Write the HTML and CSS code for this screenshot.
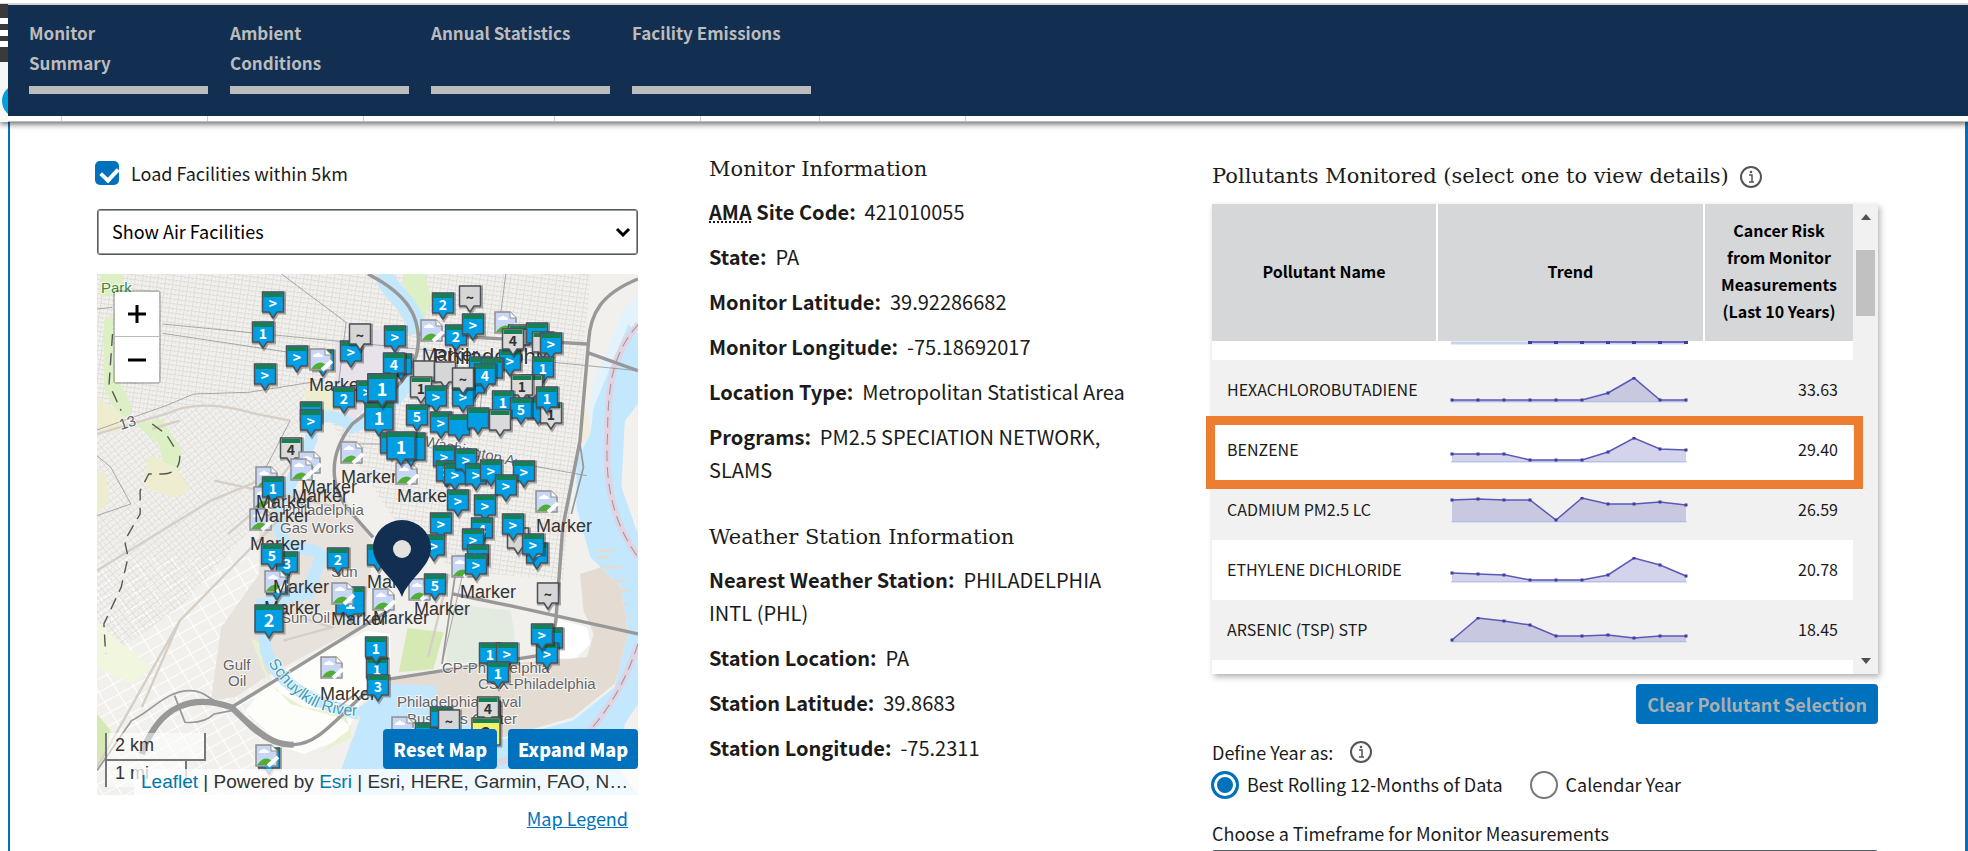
FILE: index.html
```html
<!DOCTYPE html>
<html lang="en">
<head>
<meta charset="utf-8">
<title>Monitor Summary</title>
<link rel="stylesheet" href="styles.css">
</head>
<body>
<header class="topbar">
  <svg class="edge" width="32" height="122" viewBox="0 0 32 122" aria-hidden="true">
    <path fill="#3a3a3a" d="M0 4h8v58H0z"/><path fill="#f6f6f4" d="M0 62h8v60H0z"/>
    <path stroke="#fff" stroke-width="6" d="M0 21h8M0 33h8M0 44h8"/>
    <circle cx="19" cy="101" r="17" fill="#009fe0"/>
  </svg>
  <nav class="tabs" aria-label="Sections">
    <a class="tab" href="#summary">Monitor Summary</a>
    <a class="tab" href="#ambient">Ambient Conditions</a>
    <a class="tab" href="#annual">Annual Statistics</a>
    <a class="tab" href="#emissions">Facility Emissions</a>
  </nav>
  <div class="ticks"><i></i><i></i><i></i><i></i><i></i><i></i><i></i></div>
</header>
<main class="panel" id="summary">
  <section class="map-col">
    <label class="check"><input type="checkbox" checked><span>Load Facilities within 5km</span></label>
    <select class="select" aria-label="Facilities shown"><option>Show Air Facilities</option></select>
    <div class="map">
      <svg class="map-canvas" viewBox="97 274 541 521" role="img" aria-label="Map of facilities around the monitor">
        <defs>
          <pattern id="gridA" width="22" height="14" patternUnits="userSpaceOnUse" patternTransform="rotate(8)"><path d="M0 1H22M1 0V14M12 0V7" stroke="#d5d4d1" stroke-width="2" fill="none"/></pattern>
          <pattern id="gridB" width="26" height="16" patternUnits="userSpaceOnUse" patternTransform="rotate(-38)"><path d="M0 1H26M1 0V16M14 8V16" stroke="#d7d6d3" stroke-width="2" fill="none"/></pattern>
          <pattern id="gridC" width="48" height="34" patternUnits="userSpaceOnUse" patternTransform="rotate(-30)"><path d="M0 1H48M1 0V34" stroke="#fff" stroke-width="4" fill="none"/></pattern>
          <path id="ave" d="M424 446Q480 458 545 474"/>
          <path id="riv" d="M268 663Q294 702 325 711T385 712"/>
          <g id="broken">
            <path d="M0 1H15L21 7V22H0Z" fill="#c9d7f6" stroke="#8f8f8f" stroke-width="1.5"/>
            <path d="M15 1V7H21" fill="#fff" stroke="#8f8f8f"/>
            <path d="M3 9q0-3 3-3 2-3 4 0 3 0 3 3z" fill="#fff"/>
            <path d="M1 21q6-8 12-6l3 2-4 4z" fill="#4fae35"/>
            <path d="M12 22 22 13" stroke="#fff" stroke-width="4"/>
          </g>
        </defs>
        <g transform="translate(97 274) scale(.345 .3333)">
          <path fill="#f1f0ed" d="M0 0H1568V1563H0z"/>
          <path fill="url(#gridC)" d="M0 850H480V1563H0z"/>
          <path fill="url(#gridA)" d="M0 0H1430L1400 400 1350 920 1050 890 900 800 700 480 620 330 0 440z"/>
          <path fill="url(#gridB)" d="M0 440L620 330 600 480 470 740 240 1000 0 1170z"/>
          <path fill="#e8e2dd" d="M470 740L560 650 700 640 800 810 790 930 760 1060 520 1190 400 1270 330 1280 360 1060 470 900z"/>
          <path fill="#e8e3ea" d="M690 200L830 160 910 230 880 300 740 440 690 380z"/>
          <path fill="#dcefc5" d="M10 0H75V60L10 70zM20 140L45 120 50 300 100 390 95 430 60 425 20 340zM890 0H950L970 80 940 160 890 60z"/>
          <path fill="#dcefc5" d="M110 450L190 435 245 530 240 590 200 600 180 510z"/>
          <path fill="#eeedcf" d="M0 370L60 410 90 440 60 480 0 470zM145 540L230 580 270 650 220 670 140 640zM0 590L25 600 35 680 0 720zM600 350L690 330 700 410 620 420z"/>
          <path fill="#fdfdf9" d="M520 1200L780 1070 850 1080 850 1210 760 1290 720 1390 600 1440 540 1420 430 1310z"/>
          <path fill="#e8f1d2" d="M445 1090L475 1110 480 1170 520 1250 600 1300 720 1320 740 1390 640 1440 740 1360 700 1330 560 1290 490 1210z"/>
          <path fill="#f1f6df" d="M0 1040L60 1100 160 1180 100 1230 0 1180z"/>
          <path fill="#d5e9b4" d="M900 1062L1005 1075 975 1185 875 1195zM0 1320L40 1370 30 1440 0 1480z"/>
          <path fill="#e3ebe0" d="M1030 990L1200 1010 1220 1160 1010 1170z"/>
          <path fill="#fff" d="M1335 1035L1420 1060 1430 1110 1380 1160 1330 1150z"/>
          <path fill="#e4dcd3" d="M850 1220L1050 1180 1420 1150 1440 1080 1410 1010 1400 900 1460 880 1530 950 1550 1100 1500 1230 1380 1330 1180 1390 1000 1330 980 1260 850 1260z"/>
          <path fill="#f3ebdb" d="M1410 400L1430 420 1480 640 1450 760 1400 720 1390 560z"/>
          <path class="shore" d="M1568 60L1530 100 1440 320 1425 420 1430 480 1390 540 1380 700 1420 780 1430 850 1520 940 1540 1080 1500 1240 1370 1340 1170 1400 1100 1563H1568V1240L1530 1330 1568 1250V1100L1490 820 1480 560 1500 400 1568 260z"/>
          <path fill="#c3e8fd" d="M1430 480L1440 400 1540 150 1568 180V1563H680L760 1340 760 1300 850 1230 980 1235 1000 1320 1180 1395 1380 1340 1500 1240 1540 1080 1520 940 1430 850 1390 700 1390 560z"/>
          <path fill="#f2f1ee" d="M1568 390L1530 440 1520 640 1568 780zM1568 1290L1530 1350 1510 1480 1568 1563z"/>
          <path class="piers" d="M1450 830h50M1450 850h35M1460 880h60M1480 920h50M1480 950h60M1490 990h50M1490 1030h60M1490 1070h50"/>
          <path class="water-line" d="M830 0C850 60 920 90 930 180"/>
          <path class="water-line slim" d="M905 300C900 360 820 430 740 460 700 420 650 420 625 440L620 500 560 630C530 700 510 780 560 820 600 830 640 820 650 850L610 960 480 990 490 1130C520 1220 600 1280 760 1320"/>
          <path class="boundary" d="M1570 150C1500 230 1480 320 1480 480 1470 640 1500 750 1568 850M1568 1110C1530 1230 1480 1310 1420 1380L1150 1470"/>
          <path class="boundary-dash" d="M1570 150C1500 230 1480 320 1480 480 1470 640 1500 750 1568 850M1568 1110C1530 1230 1480 1310 1420 1380"/>
          <path class="rail" d="M0 480L200 420Q300 370 460 420L560 440M160 465L240 440M470 620L330 680 0 890M600 660L240 1040 130 1300M0 1480L240 1040M590 530L470 700 380 780M340 620L700 700M560 1020L680 1060 540 1100M1020 900L960 1150"/>
          <path class="minor" d="M535 0L722 145 700 330M190 150L1568 290M190 178L590 240M0 468L200 395 280 360 440 355 620 325M0 545L40 580 98 690 0 725M1185 0L1170 120M1115 360L1105 470M960 520L1420 605M740 510H820M0 105L45 100M1060 900L1000 1170M560 440L480 600"/>
          <path class="track" d="M45 180L35 330 70 410M160 450L200 480 230 530M240 545Q240 600 190 600L150 600 125 650 125 720 80 800 90 850 70 940 20 1050 25 1140"/>
          <path class="road" d="M785 0C900 60 940 130 930 220 920 320 800 400 740 450 670 540 670 640 740 720L800 790"/>
          <path class="road" d="M1568 15C1460 60 1430 120 1425 200L1400 500 1350 760 1330 1040 1310 1140 850 1215M1030 960L1220 1000 1568 1080M930 180L1420 210M1420 235L1568 290"/>
          <path class="road" d="M860 1000L390 1300C480 1380 520 1415 570 1412 650 1410 700 1320 830 1210"/>
          <path class="road wide" d="M130 1440C180 1290 280 1260 390 1300L450 1360Q510 1415 570 1412"/>
          <path class="road thin" d="M0 1490L100 1340C160 1310 200 1250 270 1250 320 1250 330 1290 390 1300M225 1265L255 1345Q310 1350 340 1320L390 1310M1040 890L1000 1170M1400 510L1410 580 1375 720M700 1300L760 1250"/>
        </g>
        <g class="place">
          <text x="101" y="293" class="park">Park</text>
          <text x="121" y="430" transform="rotate(-18 121 430)">13</text>
          <text x="282" y="515">Philadelphia</text><text x="280" y="533">Gas Works</text>
          <text x="331" y="577">Sun</text><text x="281" y="623">Sun Oil</text>
          <text x="223" y="670">Gulf</text><text x="228" y="686">Oil</text>
          <text x="442" y="673">CP-Philadelphia</text><text x="478" y="689">CSX-Philadelphia</text>
          <text x="397" y="707">Philadelphia Naval</text><text x="407" y="724">Business Center</text>
          <text class="city" x="433" y="364">Philadelphia</text>
          <text><textPath href="#ave">Washington Ave</textPath></text>
          <text class="river"><textPath href="#riv">Schuylkill River</textPath></text>
        </g>
        <g id="markers"></g>
        <path fill="#122e51" d="M402 597c-6-18-29-30-29-49a29 28 0 0 1 58 0c0 19-23 31-29 49z"/>
        <circle cx="402" cy="549" r="9" fill="#e4e2df"/>
      </svg>
      <div class="zoom-ctl"><button type="button" aria-label="Zoom in"><svg width="18" height="18" viewBox="0 0 18 18"><path d="M9 0V18M0 9H18" stroke="#000" stroke-width="3"/></svg></button><button type="button" aria-label="Zoom out"><svg width="18" height="18" viewBox="0 0 18 18"><path d="M0 9H18" stroke="#000" stroke-width="3"/></svg></button></div>
      <div class="scale"><div class="km">2 km</div><div class="mi">1 mi</div></div>
      <div class="map-actions"><button type="button" class="btn">Reset Map</button><button type="button" class="btn">Expand Map</button></div>
      <div class="credits"><a href="#leaflet">Leaflet</a> | Powered by <a href="#esri">Esri</a> | Esri, HERE, Garmin, FAO, NOAA, USGS, EPA, NPS</div>
    </div>
    <a class="legend" href="#legend">Map Legend</a>
  </section>

  <section class="info-col">
    <h2 class="heading">Monitor Information</h2>
    <p><b><abbr title="Ambient Monitoring Archive">AMA</abbr> Site Code:</b>&nbsp; 421010055</p>
    <p><b>State:</b>&nbsp; PA</p>
    <p><b>Monitor Latitude:</b>&nbsp; 39.92286682</p>
    <p><b>Monitor Longitude:</b>&nbsp; -75.18692017</p>
    <p><b>Location Type:</b>&nbsp; Metropolitan Statistical Area</p>
    <p><b>Programs:</b>&nbsp; PM2.5 SPECIATION NETWORK, SLAMS</p>
    <h2 class="heading second">Weather Station Information</h2>
    <p><b>Nearest Weather Station:</b>&nbsp; PHILADELPHIA INTL (PHL)</p>
    <p><b>Station Location:</b>&nbsp; PA</p>
    <p><b>Station Latitude:</b>&nbsp; 39.8683</p>
    <p><b>Station Longitude:</b>&nbsp; -75.2311</p>
  </section>

  <section class="data-col">
    <div class="title-row">
      <h2 class="heading">Pollutants Monitored (select one to view details)</h2>
      <button type="button" class="info" aria-label="About pollutants"><svg width="24" height="24" viewBox="0 0 24 24"><circle cx="12" cy="12" r="10" fill="none" stroke="#555" stroke-width="2"/><path d="M10 10h3v7M10 17h5" fill="none" stroke="#555" stroke-width="1.5"/><circle cx="12" cy="7" r="1.3" fill="#555"/></svg></button>
    </div>
    <div class="grid-box">
      <table class="grid">
        <colgroup><col class="c-name"><col class="c-trend"><col class="c-risk"></colgroup>
        <thead><tr><th>Pollutant Name</th><th>Trend</th><th>Cancer Risk from Monitor Measurements (Last 10 Years)</th></tr></thead>
        <tbody>
          <tr class="cut"><td></td><td><svg class="spark" width="238" height="19"><path d="M1 2H236" stroke="#c9d3ee" stroke-width="3"/><path d="M79 1H236" stroke="#6d6cc4" stroke-width="2"/><path d="M78 1h4m22 0h4m22 0h4m22 0h4m22 0h4m22 0h4m22 0h4" stroke="#3f3da6" stroke-width="4"/></svg></td><td></td></tr>
          <tr><td>HEXACHLOROBUTADIENE</td><td><svg class="spark" width="238" height="26" data-v="23 23 23 23 23 23 16 1 23 23"></svg></td><td>33.63</td></tr>
          <tr><td>BENZENE</td><td><svg class="spark" width="238" height="26" data-v="17 17 17 23 23 23 15 1 12 13"></svg></td><td>29.40</td></tr>
          <tr><td>CADMIUM PM2.5 LC</td><td><svg class="spark" width="238" height="26" data-v="3 2 3 3 23 1 7 7 5 8"></svg></td><td>26.59</td></tr>
          <tr><td>ETHYLENE DICHLORIDE</td><td><svg class="spark" width="238" height="26" data-v="16 17 18 23 23 23 18 1 8 19"></svg></td><td>20.78</td></tr>
          <tr><td>ARSENIC (TSP) STP</td><td><svg class="spark" width="238" height="26" data-v="23 1 4 8 19 19 18 21 19 19"></svg></td><td>18.45</td></tr>
          <tr class="last"><td></td><td></td><td></td></tr>
        </tbody>
      </table>
      <div class="scrollbar"><i class="up"></i><i class="thumb"></i><i class="down"></i></div>
      <div class="callout"></div>
    </div>
    <button type="button" class="btn clear">Clear Pollutant Selection</button>
    <fieldset class="years">
      <legend>Define Year as:<button type="button" class="info" aria-label="About year definitions"><svg width="24" height="24" viewBox="0 0 24 24"><circle cx="12" cy="12" r="10" fill="none" stroke="#555" stroke-width="2"/><path d="M10 10h3v7M10 17h5" fill="none" stroke="#555" stroke-width="1.5"/><circle cx="12" cy="7" r="1.3" fill="#555"/></svg></button></legend>
      <label class="radio first"><input type="radio" name="year" checked><span>Best Rolling 12-Months of Data</span></label>
      <label class="radio"><input type="radio" name="year"><span>Calendar Year</span></label>
    </fieldset>
    <label class="frame-label" for="timeframe">Choose a Timeframe for Monitor Measurements</label>
    <select class="select" id="timeframe"><option>Last 10 Years</option></select>
  </section>
</main>
<script src="app.js"></script>
</body>
</html>
```
FILE: styles.css
```css
* { box-sizing: border-box; }
html { height: 100%; overflow: hidden; }
body { display: flex; flex-direction: column; margin: 0; height: 100%; overflow: hidden; background: #fff; color: #1b1b1b; font: 18px/33px "Noto Sans CJK SC", "Open Sans", sans-serif; }
button, select, input { font: inherit; }

.topbar { position: relative; z-index: 2; flex: none; padding: 5px 0 0 8px; border-bottom: 1px solid #bbb; box-shadow: 0 2px 6px rgba(0,0,0,.6); background: linear-gradient(#fff 3px, #aaa 4px, #fff 5px); }
.edge { position: absolute; left: 0; top: 0; }
.tabs { position: relative; display: flex; gap: 22px; padding: 13px 20px 22px 21px; background: #122e51; }
.tab { display: flex; width: 179px; height: 76px; padding-right: 50px; border-bottom: 8px solid #bcbcbc; color: #bcbcbc; font-size: 17px; font-weight: 700; line-height: 30px; text-decoration: none; }
.tab:nth-child(n+3) { padding-right: 0; }
.ticks { position: relative; display: flex; height: 5px; background: #fff; }
.ticks i { width: 146px; border-right: 1px solid #ccc; }
.ticks i:nth-child(1) { width: 54px; }
.ticks i:nth-child(3) { width: 156px; }
.ticks i:nth-child(4) { width: 191px; }
.ticks i:nth-child(6) { width: 119px; }

.panel { display: grid; flex: 1; min-height: 0; overflow: hidden; grid-template-columns: 541fr 432fr 666fr; gap: 71px; margin-left: 8px; padding: 0 87px; border-left: 2px solid #0071bc; border-right: 3px solid #0071bc; }

.map-col { display: flex; flex-direction: column; padding-top: 34px; }
.check { display: flex; align-items: center; gap: 12px; height: 34px; margin-left: -2px; }
.check input, .radio input { appearance: none; margin: 0; flex: none; }
.check input { width: 24px; height: 24px; border-radius: 5px; background: #0071bc; position: relative; }
.check input::after { content: ""; position: absolute; left: 6px; top: 6px; width: 13px; height: 8px; border: solid #fff; border-width: 0 0 4px 4px; transform: rotate(-47deg); }
.select { appearance: none; width: 100%; height: 46px; margin: 19px 0 0; padding: 0 14px 2px; border: 2px solid #565c65; border-radius: 3px; color: #000; background: #fff; }
.map-col .select { border-width: 1px; box-shadow: inset 0 0 0 1px #999; background: #fff url("data:image/svg+xml,%3Csvg xmlns='http://www.w3.org/2000/svg' width='16' height='10'%3E%3Cpath d='M2 2l6 6 6-6' fill='none' stroke='%23000' stroke-width='3'/%3E%3C/svg%3E") no-repeat right 6px center; }

.map { position: relative; margin-top: 19px; overflow: hidden; font-family: "Liberation Sans", Arial, sans-serif; }
.map-canvas { display: block; width: 100%; height: auto; }
.shore { fill: #e4f3fb; }
.piers { fill: none; stroke: #e4dcd3; stroke-width: 8; }
.water-line { fill: none; stroke: #c3e8fd; stroke-width: 56; }
.water-line.slim { stroke-width: 36; }
.boundary { fill: none; stroke: #e0d3e2; stroke-width: 20; }
.boundary-dash { fill: none; stroke: #a0949f; stroke-width: 3; stroke-dasharray: 32 18; }
.rail { fill: none; stroke: #d6cfc7; stroke-width: 7; }
.minor { fill: none; stroke: #858585; stroke-width: 2; }
.track { fill: none; stroke: #555; stroke-dasharray: 36 22; stroke-width: 4; }
.road { fill: none; stroke: #989898; stroke-width: 10; }
.road.wide { stroke-width: 18; }
.road.thin { stroke-width: 5; }
.place { font-size: 15px; fill: #646464; }
.place text { paint-order: stroke; stroke: rgba(255,255,255,.7); stroke-width: 2px; }
.place .park { fill: #40883f; }
.place .river { fill: #3f9db5; font-size: 16px; }
.place .city { fill: #333; font-size: 22px; }
.alt { font-size: 18px; fill: #333; }
.num { font: 700 14px "Noto Sans CJK SC", sans-serif; fill: #fff; text-anchor: middle; }
.num.big { font-size: 18px; }
.num.dark { fill: #333; }

.zoom-ctl { position: absolute; left: 16px; top: 16px; display: flex; flex-direction: column; border: 2px solid rgba(0,0,0,.2); border-radius: 4px; background-clip: padding-box; }
.zoom-ctl button { display: flex; align-items: center; justify-content: center; width: 44px; height: 44px; padding: 0; border: 0; background: #fff; }
.zoom-ctl button + button { height: 46px; border-top: 1px solid #bbb; }
.scale { position: absolute; left: 8px; bottom: 8px; font-size: 18px; line-height: 24px; color: #333; }
.km, .mi { border: 2px solid #777; border-top: 0; background: rgba(255,255,255,.5); padding-left: 8px; }
.km { width: 101px; height: 28px; }
.mi { width: 82px; height: 26px; border-bottom: 0; }
.map-actions { position: absolute; right: 0; bottom: 26px; display: flex; gap: 11px; }
.btn { height: 40px; padding: 0 10px 1px; border: 0; border-radius: 4px; background: #0071bc; color: #fff; font: 700 18px "Noto Sans CJK SC", "Open Sans", sans-serif; white-space: nowrap; }
.map-actions .btn { font-weight: 900; }
.credits { position: absolute; left: 37px; right: 0; bottom: 0; height: 26px; padding: 0 7px; overflow: hidden; white-space: nowrap; text-overflow: ellipsis; background: rgba(255,255,255,.75); color: #333; font-size: 19px; line-height: 26px; }
.credits a { color: #0078a8; text-decoration: none; }
.legend { align-self: flex-end; margin: 7px 10px 0 0; color: #0071bc; }

.info-col { padding: 31px 8px 0 0; font-size: 20px; }
.info-col p { margin: 0 0 12px; }
.heading { margin: 0 0 9px; color: #1b1b1b; font: 400 21px/33px "DejaVu Serif", serif; }
.heading.second { margin-top: 35px; }
abbr { text-decoration: underline dotted; }

.data-col { display: flex; flex-direction: column; align-items: flex-start; padding-top: 38px; }
.title-row { display: flex; align-items: center; gap: 10px; height: 33px; margin-bottom: 11px; }
.title-row .heading { margin: 0; white-space: nowrap; }
.info { display: inline-flex; padding: 0; border: 0; background: none; }
.grid-box { position: relative; display: flex; width: 100%; background: #f1f1f1; box-shadow: 2px 3px 6px rgba(0,0,0,.3); }
.grid { flex: 1; table-layout: fixed; border-collapse: collapse; font-size: 16px; line-height: 27px; }
.c-name { width: 225px; }
.c-risk { width: 149px; }
.grid th { height: 137px; padding: 0 10px 3px; background: #d6d7d9; color: #000; font-weight: 700; text-align: center; }
.grid th + th { border-left: 2px solid #fff; }
.grid td { height: 60px; padding: 0 15px 1px; white-space: nowrap; }
.grid td:nth-child(2) { padding: 0 0 0 13px; }
.grid td:last-child { text-align: right; }
.grid tbody tr:nth-child(odd) { background: #fff; }
.grid .cut td { height: 19px; vertical-align: top; line-height: 0; }
.grid .last td { height: 14px; }
.spark { display: block; }
.scrollbar { display: flex; flex-direction: column; align-items: center; width: 25px; background: #f1f1f1; padding: 10px 0; }
.up, .down { border: 5px solid transparent; }
.up { border-top: 0; border-bottom: 6px solid #505050; }
.down { border-bottom: 0; border-top: 6px solid #505050; margin-top: auto; }
.thumb { width: 19px; height: 66px; margin-top: 30px; background: #c1c1c1; }
.callout { position: absolute; left: -6px; right: 15px; top: 212px; height: 73px; border: 9px solid #ed7d31; }
.clear { align-self: flex-end; margin-top: 10px; padding: 0 11px 1px; color: #a9aeb1; }
.years { display: flex; flex-wrap: wrap; margin: 12px 0 0; padding: 0; border: 0; }
.years legend { display: flex; align-items: center; gap: 16px; padding: 0; height: 32px; }
.radio { display: flex; align-items: center; gap: 8px; margin-left: -1px; }
.radio.first { margin-right: 28px; }
.radio input { width: 28px; height: 28px; border: 2px solid #777; border-radius: 50%; background: #fff; }
.radio input:checked { border: 3px solid #0071bc; background: #0071bc; box-shadow: inset 0 0 0 3px #fff; }
.frame-label { margin-top: 16px; }
.data-col .select { flex: none; margin-top: 0; }
```
FILE: app.js
```js
const NS = "http://www.w3.org/2000/svg";

function add(parent, tag, attrs, text) {
  const el = document.createElementNS(NS, tag);
  for (const key in attrs) el.setAttribute(key, attrs[key]);
  if (text) el.textContent = text;
  parent.appendChild(el);
}

document.querySelectorAll(".spark[data-v]").forEach(svg => {
  const points = svg.dataset.v.split(" ").map((v, i) => [2 + i * 26, Number(v)]);
  const line = points.map(p => p.join(",")).join(" ");
  add(svg, "path", { d: "M1 25H237", stroke: "#cfdcf2", "stroke-width": 1.5 });
  add(svg, "polygon", { points: "2,25 " + line + " 236,25", fill: "rgba(80,78,180,.25)" });
  add(svg, "polyline", { points: line, fill: "none", stroke: "#5a58b8", "stroke-width": 1.5 });
  points.forEach(p => add(svg, "rect", { x: p[0] - 1.5, y: p[1] - 1.5, width: 3, height: 3, fill: "#3f3da6" }));
});

// Facilities: centre x, top y, label, colour (b blue, g grey with cap, p plain grey, y yellow), L for a large pin.
// "img" draws an unloaded marker picture; "alt" its text.
const items = [
  [273,292,">","b"],[263,322,"1","b"],[297,346,">","b"],[265,364,">","b"],[323,350,"","b"],[321,348,"img"],[309,391,"alt"],
  [351,341,">","b"],[360,324,"~","p"],[367,381,">","b"],[344,387,"2","b"],[311,402,"","b"],[311,410,">","b"],
  [291,438,"4","g"],[310,451,"img"],[302,458,"img"],[352,441,"img"],[267,466,"img"],[265,486,"img"],[273,477,"1","b"],[261,508,"img"],
  [341,483,"alt"],[301,493,"alt"],[292,502,"alt"],[256,508,"alt"],[254,522,"alt"],[250,550,"alt"],
  [470,286,"~","p"],[443,293,"2","b"],[432,319,"img"],[456,325,"2","b"],[473,314,">","b"],[395,326,">","b"],[401,354,"","b"],[394,353,"4","b"],
  [422,361,"alt"],[506,311,"img"],[510,350,">","b"],[519,325,"","g"],[513,329,"4","g"],[537,323,"","b"],[543,332,"","g"],[551,333,">","b"],[543,357,"1","b"],
  [424,361,"","p"],[445,362,"","p"],[480,357,"","b"],[492,358,"","b"],[474,373,"","b"],[485,364,"4","b"],[463,386,">","b"],[463,368,"~","p"],
  [421,377,"1","g"],[436,386,">","b"],[532,375,"","g"],[522,375,"1","g"],[503,391,"1","b"],[538,398,"","b"],[551,403,"1","g"],[521,398,"5","b"],[547,387,"1","b"],
  [382,374,"1","b","L"],[379,403,"1","b","L"],[382,374,"1","b","L"],[417,405,"5","b"],[441,412,">","b"],[459,415,"","b"],[478,408,"","b"],[500,410,"","g"],
  [407,462,"img"],[391,433,"","b"],[411,433,"","b","L"],[401,432,"1","b","L"],[397,502,"alt"],
  [444,446,">","b"],[447,461,">","b"],[455,464,">","b"],[466,449,">","b"],[476,464,">","b"],[491,460,">","b"],[524,461,">","b"],[506,475,">","b"],
  [458,490,">","b"],[485,495,">","b"],[441,513,">","b"],[482,518,"4","b"],[473,529,">","b"],[518,528,"","p"],[513,514,">","b"],[537,543,">","b"],[533,534,">","b"],
  [547,490,"img"],[536,532,"alt"],[434,535,">","b"],[463,555,"img"],[478,545,">","b"],[476,554,">","b"],[378,545,"","b"],[367,588,"alt"],
  [287,552,"3","b"],[272,544,"5","b"],[338,548,"2","b"],[277,574,"","b"],[276,570,"img"],[273,593,"alt"],[264,614,"alt"],[269,605,"2","b","L"],
  [350,587,"1","b","L"],[343,582,"img"],[331,625,"alt"],[384,588,"img"],[420,578,"img"],[373,624,"alt"],[435,574,"5","b"],[414,615,"alt"],[460,598,"alt"],
  [548,583,"~","p"],[552,628,"","b"],[547,643,">","b"],[542,624,">","b"],[490,643,"1","b"],[507,643,">","b"],[498,662,"1","b"],
  [377,658,"1","b"],[376,637,"1","b"],[332,656,"img"],[320,700,"alt"],[378,675,"3","b"],
  [403,716,"img"],[426,723,"","b"],[441,707,"","b"],[449,710,"~","p"],[490,702,"","b"],[488,697,"4","g"],[486,718,"2","y","L"],
  [269,748,"","b"],[267,744,"img"]
];
const layer = document.getElementById("markers");
const fills = { b: "#009ee3", g: "#dadada", p: "#d6d6d6", y: "#f7ef6a" };

items.forEach(([x, y, label, kind, size]) => {
  if (label === "img") return add(layer, "use", { href: "#broken", x: x - 11, y });
  if (label === "alt") return add(layer, "text", { x, y, class: "alt" }, "Marker");
  const w = size ? 28 : 21, h = size ? 27 : 20, left = x - w / 2;
  const shape = (dx, dy) => `M${left + dx} ${y + dy}h${w}v${h}h-${w / 2 - 4}l-4 6-4-6h-${w / 2 - 4}z`;
  add(layer, "path", { d: shape(1, 1), fill: "none", stroke: "rgba(0,0,0,.3)", "stroke-width": 3 });
  add(layer, "path", { d: shape(0, 0), fill: fills[kind], stroke: "#4b5157", "stroke-width": 1.5, "stroke-linejoin": "round" });
  if (kind !== "p") add(layer, "rect", { x: left + 1, y: y + 1, width: w - 2, height: 4, fill: "#158050" });
  const cls = "num" + (size ? " big" : "") + (kind === "b" ? "" : " dark");
  if (label) add(layer, "text", { x, y: y + (size ? 22 : 17), class: cls }, label);
});
```
